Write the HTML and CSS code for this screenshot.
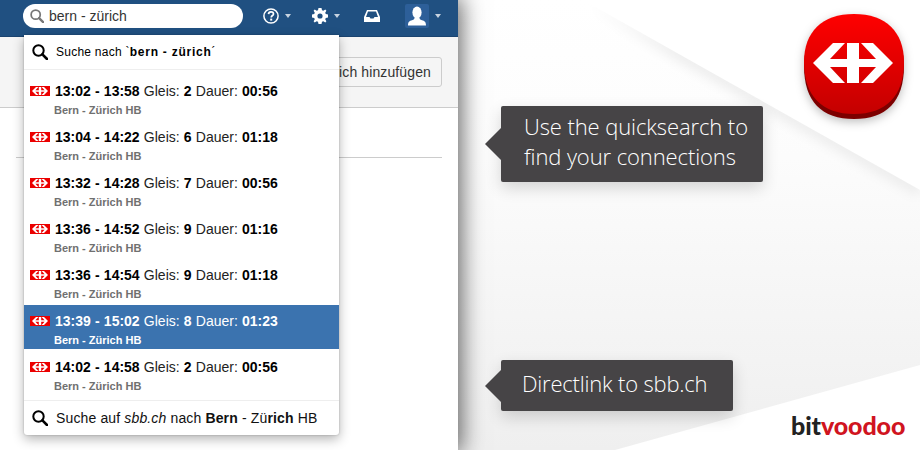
FILE: index.html
```html
<!DOCTYPE html>
<html lang="de">
<head>
<meta charset="utf-8">
<title>SBB Quicksearch</title>
<link rel="stylesheet" href="styles.css">
</head>
<body>
<svg class="defs" width="0" height="0">
  <defs>
    <symbol id="sbb-mark" viewBox="0 0 80 40">
      <path d="M34 0H46V16H63L48 0H60L80 20L60 40H48L63 24H46V40H34V24H17L32 40H20L0 20L20 0H32L17 16H34Z"/>
    </symbol>
    <symbol id="sbb-small" viewBox="0 0 20 10">
      <rect width="20" height="10" fill="#eb0000"/>
      <svg x="2" y="1" width="16" height="8"><use href="#sbb-mark" fill="#fff"/></svg>
    </symbol>
    <symbol id="lens" viewBox="0 0 16 16">
      <circle cx="6.5" cy="6.5" r="5.2" fill="none" stroke="currentColor" stroke-width="2"/>
      <path d="M10.4 10.4L15 15" stroke="currentColor" stroke-width="2.6" stroke-linecap="round"/>
    </symbol>
  </defs>
</svg>

<div class="canvas">
  <svg class="backdrop" viewBox="0 0 920 450" width="920" height="450">
    <defs>
      <linearGradient id="wash" x1="0" y1="0" x2="0" y2="1">
        <stop offset="0" stop-color="#ffffff"/>
        <stop offset="0.35" stop-color="#fcfcfc"/>
        <stop offset="1" stop-color="#efefef"/>
      </linearGradient>
      <linearGradient id="edge" gradientUnits="userSpaceOnUse" x1="590" y1="0" x2="680" y2="0">
        <stop offset="0" stop-color="#ffffff"/>
        <stop offset="1" stop-color="#ebebeb"/>
      </linearGradient>
      <clipPath id="washclip"><path d="M458 0H583L920 190V365L615 450H458Z"/></clipPath>
      <filter id="soft" filterUnits="userSpaceOnUse" x="540" y="-60" width="420" height="320"><feGaussianBlur stdDeviation="6"/></filter>
    </defs>
    <path d="M458 0H583L920 190V365L615 450H458Z" fill="url(#wash)"/>
    <g clip-path="url(#washclip)">
      <path d="M583 0L920 190" stroke="url(#edge)" stroke-width="12" filter="url(#soft)"/>
    </g>
  </svg>

  <div class="app">
    <header class="nav">
      <div class="search">
        <svg class="search-icon"><use href="#lens"/></svg>
        <span class="search-text">bern - zürich</span>
      </div>
      <div class="nav-items">
        <div class="nav-item nav-help">
          <svg class="ic" viewBox="0 0 16 16" width="16" height="16">
            <circle cx="8" cy="8" r="7.1" fill="none" stroke="#fff" stroke-width="1.5"/>
            <path d="M5.5 6.1C5.6 4.5 6.7 3.8 8 3.8C9.5 3.8 10.5 4.7 10.5 5.9C10.5 7.5 8.2 7.5 8.2 9.4" fill="none" stroke="#fff" stroke-width="1.7"/>
            <rect x="7.2" y="10.6" width="2" height="2" fill="#fff"/>
          </svg>
          <i class="caret"></i>
        </div>
        <div class="nav-item nav-gear">
          <svg class="ic" viewBox="0 0 16 16" width="16" height="16">
            <path fill="#fff" fill-rule="evenodd" d="M6.5 0H9.5L10 2.2L11.3 2.8L13.3 1.6L14.4 2.7L13.2 4.7L13.8 6L16 6.5V9.5L13.8 10L13.2 11.3L14.4 13.3L13.3 14.4L11.3 13.2L10 13.8L9.5 16H6.5L6 13.8L4.7 13.2L2.7 14.4L1.6 13.3L2.8 11.3L2.2 10L0 9.5V6.5L2.2 6L2.8 4.7L1.6 2.7L2.7 1.6L4.7 2.8L6 2.2ZM8 5.4A2.6 2.6 0 1 0 8 10.6A2.6 2.6 0 1 0 8 5.4Z"/>
          </svg>
          <i class="caret"></i>
        </div>
        <div class="nav-item nav-inbox">
          <svg class="ic" viewBox="0 0 16 12" width="16" height="12">
            <path fill="#fff" fill-rule="evenodd" d="M3 0H13L16 7V12H0V7ZM4 1.5L2 7H5.5L6.5 8.5H9.5L10.5 7H14L12 1.5Z"/>
          </svg>
        </div>
        <div class="nav-item nav-user">
          <div class="avatar">
            <svg viewBox="0 0 20 20" width="20" height="20">
              <ellipse cx="10" cy="6.5" rx="4.6" ry="6" fill="#fff"/>
              <path fill="#fff" d="M7.5 11.5H12.5C12.5 13 13 13.5 15 14.2C17.5 15 19 15.5 19 19.5H1C1 15.5 2.5 15 5 14.2C7 13.5 7.5 13 7.5 11.5Z"/>
            </svg>
          </div>
          <i class="caret"></i>
        </div>
      </div>
    </header>
    <section class="band">
      <button class="btn">Persönlich hinzufügen</button>
    </section>
    <main class="body">
      <div class="rule"></div>
    </main>
  </div>

  <div class="dropdown">
    <div class="dd-head">
      <svg class="dd-lens"><use href="#lens"/></svg>
      <span class="dd-query">Suche nach `<b>bern - zürich</b>´</span>
    </div>
    <ul class="results">
      <li class="result">
        <svg class="sbb"><use href="#sbb-small"/></svg>
        <div><div class="line"><b>13:02 - 13:58</b> Gleis: <b>2</b> Dauer: <b>00:56</b></div><div class="route">Bern - Zürich HB</div></div>
      </li>
      <li class="result">
        <svg class="sbb"><use href="#sbb-small"/></svg>
        <div><div class="line"><b>13:04 - 14:22</b> Gleis: <b>6</b> Dauer: <b>01:18</b></div><div class="route">Bern - Zürich HB</div></div>
      </li>
      <li class="result">
        <svg class="sbb"><use href="#sbb-small"/></svg>
        <div><div class="line"><b>13:32 - 14:28</b> Gleis: <b>7</b> Dauer: <b>00:56</b></div><div class="route">Bern - Zürich HB</div></div>
      </li>
      <li class="result">
        <svg class="sbb"><use href="#sbb-small"/></svg>
        <div><div class="line"><b>13:36 - 14:52</b> Gleis: <b>9</b> Dauer: <b>01:16</b></div><div class="route">Bern - Zürich HB</div></div>
      </li>
      <li class="result">
        <svg class="sbb"><use href="#sbb-small"/></svg>
        <div><div class="line"><b>13:36 - 14:54</b> Gleis: <b>9</b> Dauer: <b>01:18</b></div><div class="route">Bern - Zürich HB</div></div>
      </li>
      <li class="result active">
        <svg class="sbb"><use href="#sbb-small"/></svg>
        <div><div class="line"><b>13:39 - 15:02</b> Gleis: <b>8</b> Dauer: <b>01:23</b></div><div class="route">Bern - Zürich HB</div></div>
      </li>
      <li class="result">
        <svg class="sbb"><use href="#sbb-small"/></svg>
        <div><div class="line"><b>14:02 - 14:58</b> Gleis: <b>2</b> Dauer: <b>00:56</b></div><div class="route">Bern - Zürich HB</div></div>
      </li>
    </ul>
    <div class="dd-foot">
      <svg class="dd-lens"><use href="#lens"/></svg>
      <span class="foot-text">Suche auf <i>sbb.ch</i> nach <b>Bern</b> - Zü<b>rich</b> HB</span>
    </div>
  </div>

  <div class="callout callout-search">Use the quicksearch to<br>find your connections</div>
  <div class="callout callout-link">Directlink to sbb.ch</div>

  <div class="badge">
    <svg viewBox="0 0 100 106" width="100" height="106">
      <defs>
        <linearGradient id="face" x1="0" y1="0" x2="0" y2="1">
          <stop offset="0" stop-color="#ff0000"/>
          <stop offset="1" stop-color="#c40000"/>
        </linearGradient>
      </defs>
      <path fill="#7d0000" d="M50 6C82 6 100 22 100 52C100 88 82 105 50 105C18 105 0 88 0 52C0 22 18 6 50 6Z"/>
      <path fill="url(#face)" d="M50 0C82 0 100 18 100 48C100 82 82 100 50 100C18 100 0 82 0 48C0 18 18 0 50 0Z"/>
      <svg x="9" y="29" width="80" height="40"><use href="#sbb-mark" fill="#fff"/></svg>
    </svg>
  </div>

  <div class="brand">bit<span>voodoo</span></div>
</div>
</body>
</html>
```
FILE: styles.css
```css
* { box-sizing: border-box; }
html, body { margin: 0; padding: 0; }
body { background: #fff; font-family: "Liberation Sans", Arial, sans-serif; color: #000; }
.defs { position: absolute; }
.canvas { position: relative; width: 920px; height: 450px; overflow: hidden; background: #fff; }
.backdrop { position: absolute; left: 0; top: 0; }

.app { position: relative; width: 458px; height: 450px; display: flex; flex-direction: column; background: #fff; box-shadow: 0 0 22px 3px rgba(0,0,0,.62); }
.nav { height: 37px; flex: none; background: #205081; border-bottom: 1px solid #1b4470; display: flex; align-items: flex-start; padding: 4px 17px 0 23px; justify-content: space-between; }
.search { width: 220px; height: 24px; background: #fff; border-radius: 12px; display: flex; align-items: center; padding-left: 7px; gap: 5px; }
.search-icon { width: 14px; height: 14px; color: #777; flex: none; }
.search-text { font-size: 14px; color: #333; }
.nav-items { display: flex; align-items: center; height: 24px; }
.nav-item { display: flex; align-items: center; }
.ic { display: block; flex: none; }
.caret { display: block; width: 0; height: 0; border: 3px solid transparent; border-bottom: 0; border-top: 4px solid #c7d3e0; margin-left: 6px; }
.nav-help { margin-right: 21px; }
.nav-gear { margin-right: 24px; }
.nav-inbox { margin-right: 25px; }
.avatar { width: 24px; height: 24px; background: #2d5f99; border-radius: 2px; display: flex; align-items: center; justify-content: center; }

.band { height: 71px; flex: none; background: #f5f5f5; border-bottom: 1px solid #ccc; display: flex; justify-content: flex-end; align-items: flex-start; padding: 20px 16px 0 0; }
.btn { height: 30px; padding: 0 10px; font: 14px "Liberation Sans", Arial, sans-serif; letter-spacing: .12px; color: #333; background: #f5f5f5; border: 1px solid #ccc; border-radius: 3px; }
.body { flex: 1; padding: 49px 16px 0; }
.rule { height: 1px; background: #ccc; }

.dropdown { position: absolute; left: 24px; top: 35px; width: 315px; height: 400px; background: #fff; border-radius: 0 0 3px 3px; box-shadow: 0 4px 12px rgba(0,0,0,.3), 0 0 2px rgba(0,0,0,.25); display: flex; flex-direction: column; }
.dd-head { height: 35px; flex: none; border-bottom: 1px solid #eee; display: flex; align-items: center; padding: 0 0 0 8px; gap: 8px; font-size: 12px; }
.dd-lens { width: 16px; height: 16px; flex: none; color: #000; }
.dd-query { letter-spacing: .25px; }
.dd-query b { letter-spacing: .75px; }
.results { list-style: none; margin: 0; padding: 5px 0 0; flex: 1; }
.result { height: 44px; margin-bottom: 2px; display: flex; align-items: flex-start; padding: 6px 0 0 6px; gap: 5px; }
.sbb { width: 20px; height: 10px; flex: none; margin-top: 5px; }
.line { font-size: 14px; line-height: 20px; color: #222; word-spacing: .3px; }
.line b { color: #000; }
.route { font-size: 11px; font-weight: 700; line-height: 18px; color: #707070; margin-left: -1px; }
.result.active { background: #3b73af; }
.result.active .line, .result.active .line b, .result.active .route { color: #fff; }
.dd-foot { height: 35px; flex: none; border-top: 1px solid #eee; display: flex; align-items: center; padding: 0 0 0 8px; gap: 8px; font-size: 14px; color: #111; }
.foot-text { letter-spacing: .14px; }

.callout { position: absolute; left: 501px; background: #464446; color: #fff; border-radius: 2px; font-family: "Open Sans", sans-serif; font-weight: 300; font-size: 22px; line-height: 30px; letter-spacing: -.1px; box-shadow: 0 6px 16px rgba(0,0,0,.16); }
.callout::before { content: ""; position: absolute; left: -16px; top: 50%; margin-top: -16px; border: 16px solid transparent; border-left: 0; border-right-color: #464446; }
.callout-search { top: 106px; width: 262px; height: 76px; padding: 5px 0 0 23px; }
.callout-link { top: 360px; width: 232px; height: 51px; padding: 8px 0 0 21px; letter-spacing: -.2px; }

.badge { position: absolute; left: 804px; top: 14px; filter: drop-shadow(0 3px 5px rgba(0,0,0,.25)); }
.badge svg { display: block; }

.brand { position: absolute; left: 791px; top: 409px; font-family: "Lato", sans-serif; font-weight: 900; font-size: 25px; line-height: 32px; letter-spacing: -.1px; color: #222; }
.brand span { color: #d01420; }
```
